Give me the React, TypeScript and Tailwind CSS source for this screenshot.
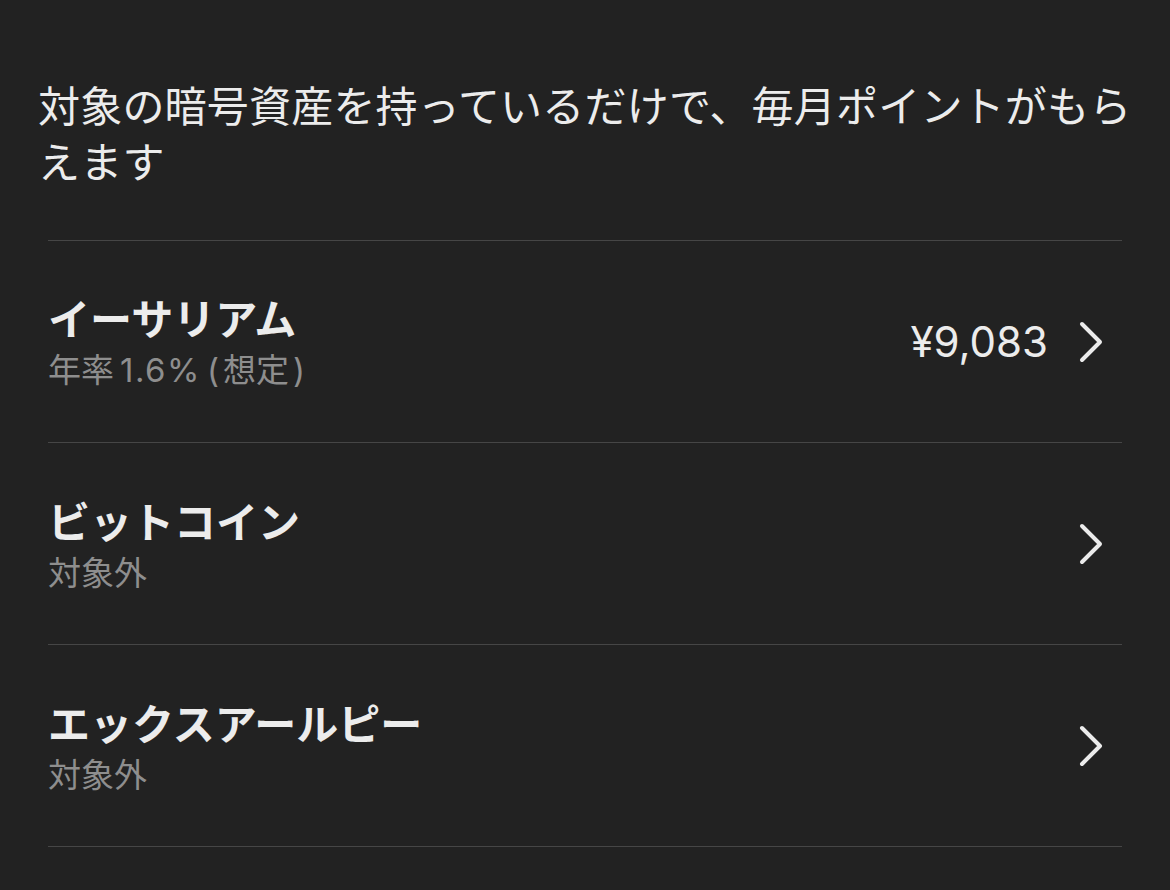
import React from "react";

const font = { fontFamily: '"Noto Sans CJK JP", "Noto Sans", sans-serif' };
const latin = { fontFamily: '"Inter", "Noto Sans CJK JP", sans-serif' };

function Chevron() {
  return (
    <svg width="26" height="44" viewBox="0 0 26 44" fill="none" className="shrink-0">
      <path d="M4 4 L22 22 L4 40" stroke="#ececec" strokeWidth="4" strokeLinecap="round" strokeLinejoin="round" />
    </svg>
  );
}

type Row = { name: string; sub: React.ReactNode; value?: string };

const rows: Row[] = [
  {
    name: "イーサリアム",
    sub: (
      <>
        年率<span style={latin} className="ml-[6px] tracking-[1.5px]">1.6%</span>
        <span style={latin} className="ml-[6px]">(</span>
        <span className="mx-[4px]">想定</span>
        <span style={latin}>)</span>
      </>
    ),
    value: "¥9,083",
  },
  { name: "ビットコイン", sub: "対象外" },
  { name: "エックスアールピー", sub: "対象外" },
];

export default function App() {
  return (
    <div className="w-[1170px] h-[890px] bg-[#222222] overflow-hidden" style={font}>
      <div className="pt-[76px] pl-[38px] pr-[30px]">
        <p className="text-[42px] leading-[56px] text-[#ececec] font-normal tracking-[0.2px]">
          対象の暗号資産を持っているだけで、毎月ポイントがもらえます
        </p>
      </div>
      <div className="mt-[52px] mx-[48px] border-t border-[#464646]">
        {rows.map((r) => (
          <div key={r.name} className="h-[202px] flex items-center border-b border-[#464646]">
            <div className="flex-1 flex flex-col pt-[2px]">
              <span className="text-[42px] leading-[52px] font-bold text-[#ececec]">{r.name}</span>
              <span className="text-[33px] leading-[50px] text-[#8e8e8e]">{r.sub}</span>
            </div>
            {r.value && (
              <span className="text-[42px] leading-[50px] text-[#ececec] mr-[30px]" style={latin}>
                {r.value}
              </span>
            )}
            <div className="mr-[18px]">
              <Chevron />
            </div>
          </div>
        ))}
      </div>
    </div>
  );
}
